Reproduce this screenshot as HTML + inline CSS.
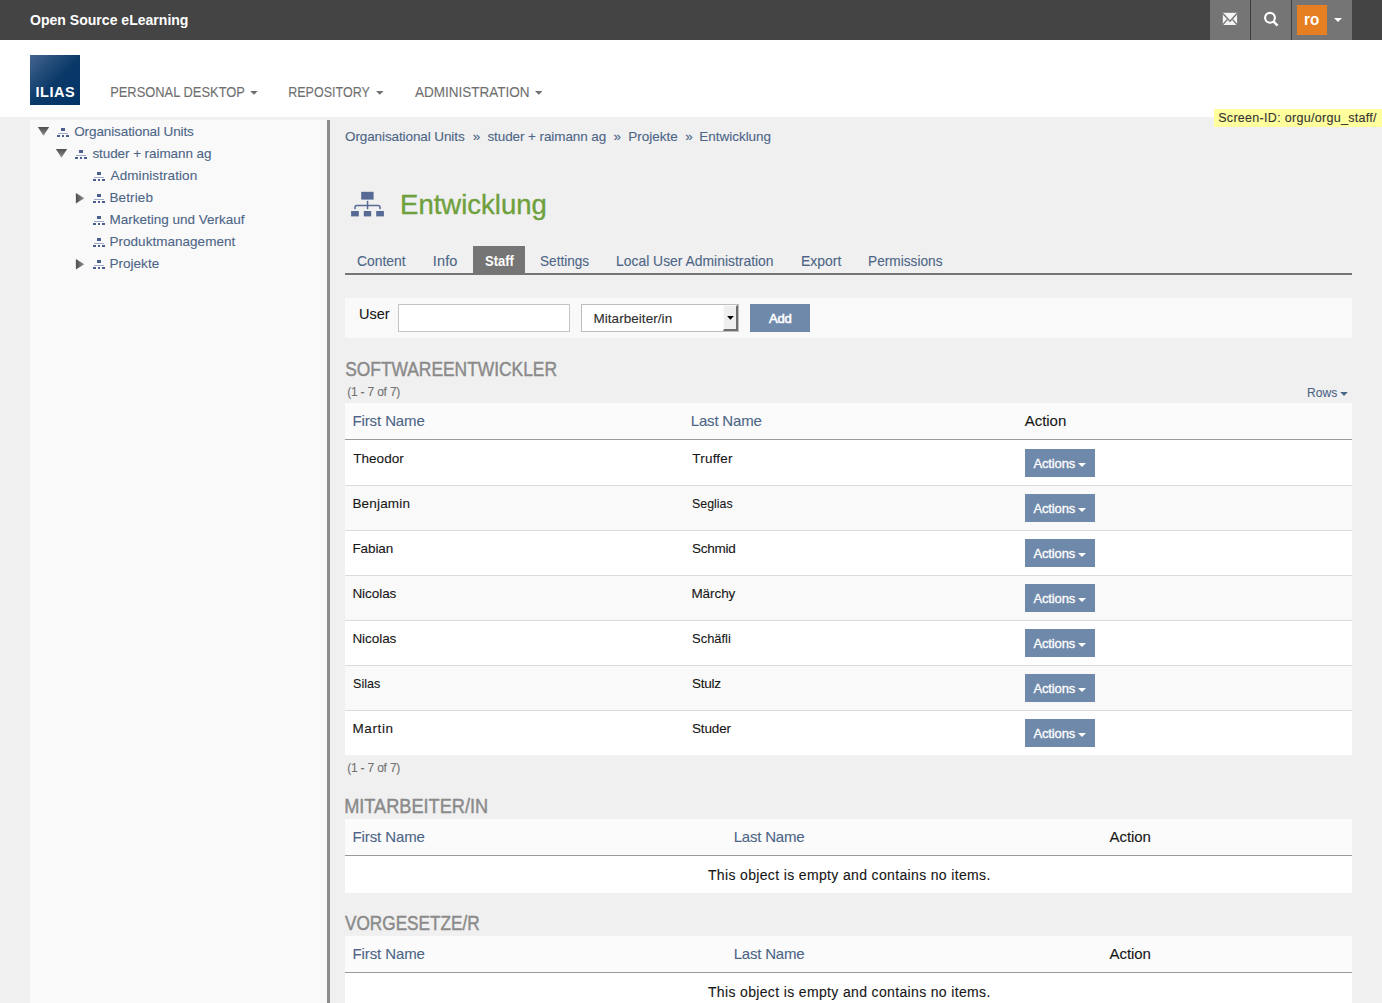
<!DOCTYPE html>
<html><head><meta charset="utf-8">
<style>
*{margin:0;padding:0;box-sizing:border-box}
html,body{width:1382px;height:1003px;overflow:hidden}
body{background:#f0f0f0;font-family:"Liberation Sans",sans-serif;position:relative}
.a{position:absolute}
.t{position:absolute;white-space:nowrap;line-height:1;-webkit-text-stroke:0.1px currentColor}
svg{position:absolute;overflow:visible}
</style></head><body>
<div class="a" style="left:0px;top:0px;width:1382px;height:40px;background:#444;"></div>
<div class="a" style="left:1210px;top:0px;width:142px;height:40px;background:#757575;"></div>
<div class="a" style="left:1250px;top:0px;width:1px;height:40px;background:#3c3c3c;"></div>
<div class="a" style="left:1291px;top:0px;width:1px;height:40px;background:#3c3c3c;"></div>
<div class="a" style="left:1297px;top:5px;width:30px;height:30px;background:#e67e22;"></div>
<div class="a" style="left:0px;top:40px;width:1382px;height:77px;background:#fff;"></div>
<div class="a" style="left:30px;top:55px;width:50px;height:50px;background:linear-gradient(135deg,#44658f 0%,#0a3969 52%,#003466 100%);"></div>
<div class="a" style="left:1214px;top:109px;width:168px;height:18px;background:#ffff9e;"></div>
<div class="a" style="left:30px;top:120px;width:297px;height:883px;background:#f9f9f9;"></div>
<div class="a" style="left:327px;top:120px;width:3px;height:883px;background:#8c8c8c;"></div>
<div class="a" style="left:473px;top:246px;width:52px;height:27px;background:#757575;"></div>
<div class="a" style="left:345px;top:273px;width:1007px;height:2px;background:#757575;"></div>
<div class="a" style="left:345px;top:298px;width:1007px;height:40px;background:#f9f9f9;"></div>
<div class="a" style="left:398px;top:304px;width:172px;height:28px;background:#fff;border:1px solid #c4c4c4"></div>
<div class="a" style="left:581px;top:304px;width:158px;height:28px;background:#fff;border:1px solid #bdbdbd"></div>
<div class="a" style="left:723px;top:305px;width:15px;height:26px;background:#efefef;border-left:1px solid #fafafa;border-top:1px solid #fafafa;border-right:2px solid #6e6e6e;border-bottom:2px solid #6e6e6e"></div>
<div class="a" style="left:750px;top:304px;width:60px;height:28px;background:#6f89ab;"></div>
<div class="a" style="left:345px;top:403px;width:1007px;height:36px;background:#fbfbfb;"></div>
<div class="a" style="left:345px;top:439px;width:1007px;height:1px;background:#999999;"></div>
<div class="a" style="left:345px;top:440px;width:1007px;height:45px;background:#ffffff;"></div>
<div class="a" style="left:345px;top:485px;width:1007px;height:45px;background:#f9f9f9;"></div>
<div class="a" style="left:345px;top:530px;width:1007px;height:45px;background:#ffffff;"></div>
<div class="a" style="left:345px;top:575px;width:1007px;height:45px;background:#f9f9f9;"></div>
<div class="a" style="left:345px;top:620px;width:1007px;height:45px;background:#ffffff;"></div>
<div class="a" style="left:345px;top:665px;width:1007px;height:45px;background:#f9f9f9;"></div>
<div class="a" style="left:345px;top:710px;width:1007px;height:45px;background:#ffffff;"></div>
<div class="a" style="left:345px;top:485px;width:1007px;height:1px;background:#dcdcdc;"></div>
<div class="a" style="left:1025px;top:449px;width:70px;height:28px;background:#6f89ab;"></div>
<div class="a" style="left:345px;top:530px;width:1007px;height:1px;background:#dcdcdc;"></div>
<div class="a" style="left:1025px;top:494px;width:70px;height:28px;background:#6f89ab;"></div>
<div class="a" style="left:345px;top:575px;width:1007px;height:1px;background:#dcdcdc;"></div>
<div class="a" style="left:1025px;top:539px;width:70px;height:28px;background:#6f89ab;"></div>
<div class="a" style="left:345px;top:620px;width:1007px;height:1px;background:#dcdcdc;"></div>
<div class="a" style="left:1025px;top:584px;width:70px;height:28px;background:#6f89ab;"></div>
<div class="a" style="left:345px;top:665px;width:1007px;height:1px;background:#dcdcdc;"></div>
<div class="a" style="left:1025px;top:629px;width:70px;height:28px;background:#6f89ab;"></div>
<div class="a" style="left:345px;top:710px;width:1007px;height:1px;background:#dcdcdc;"></div>
<div class="a" style="left:1025px;top:674px;width:70px;height:28px;background:#6f89ab;"></div>
<div class="a" style="left:1025px;top:719px;width:70px;height:28px;background:#6f89ab;"></div>
<div class="a" style="left:345px;top:819px;width:1007px;height:36px;background:#fbfbfb;"></div>
<div class="a" style="left:345px;top:855px;width:1007px;height:1px;background:#999999;"></div>
<div class="a" style="left:345px;top:856px;width:1007px;height:37px;background:#ffffff;"></div>
<div class="a" style="left:345px;top:936px;width:1007px;height:36px;background:#fbfbfb;"></div>
<div class="a" style="left:345px;top:972px;width:1007px;height:1px;background:#999999;"></div>
<div class="a" style="left:345px;top:973px;width:1007px;height:37px;background:#ffffff;"></div>

<svg style="left:0;top:0" width="1" height="1"><polygon points="250.2,91 257.7,91 253.95,94.8" fill="#6f6f6f"/></svg>
<svg style="left:0;top:0" width="1" height="1"><polygon points="376,91 383.5,91 379.75,94.8" fill="#6f6f6f"/></svg>
<svg style="left:0;top:0" width="1" height="1"><polygon points="535,91 542.5,91 538.75,94.8" fill="#6f6f6f"/></svg>
<svg style="left:0;top:0" width="1" height="1"><polygon points="1334,18 1342,18 1338.0,22" fill="#fff"/></svg>
<svg style="left:0;top:0" width="1" height="1"><polygon points="1340.2,392 1347.8,392 1344.0,396" fill="#4c6586"/></svg>
<svg style="left:0;top:0" width="1" height="1"><polygon points="727.1,316 733.8000000000001,316 730.45,319.7" fill="#000"/></svg>
<svg style="left:0;top:0" width="1" height="1"><polygon points="1078,463 1086,463 1082.0,467" fill="#fff"/></svg>
<svg style="left:0;top:0" width="1" height="1"><polygon points="1078,508 1086,508 1082.0,512" fill="#fff"/></svg>
<svg style="left:0;top:0" width="1" height="1"><polygon points="1078,553 1086,553 1082.0,557" fill="#fff"/></svg>
<svg style="left:0;top:0" width="1" height="1"><polygon points="1078,598 1086,598 1082.0,602" fill="#fff"/></svg>
<svg style="left:0;top:0" width="1" height="1"><polygon points="1078,643 1086,643 1082.0,647" fill="#fff"/></svg>
<svg style="left:0;top:0" width="1" height="1"><polygon points="1078,688 1086,688 1082.0,692" fill="#fff"/></svg>
<svg style="left:0;top:0" width="1" height="1"><polygon points="1078,733 1086,733 1082.0,737" fill="#fff"/></svg>
<svg style="left:0;top:0" width="1" height="1">
<rect x="1222.8" y="12.8" width="14.3" height="12.2" fill="#f4f4f4"/>
<polyline points="1222.8,13.6 1230,21.2 1237.1,13.6" fill="none" stroke="#757575" stroke-width="1.5"/>
<line x1="1222.6" y1="25" x2="1227.4" y2="19.4" stroke="#757575" stroke-width="1.3"/>
<line x1="1237.3" y1="25" x2="1232.5" y2="19.4" stroke="#757575" stroke-width="1.3"/>
</svg>
<svg style="left:0;top:0" width="1" height="1">
<circle cx="1270" cy="17.8" r="4.9" fill="none" stroke="#fff" stroke-width="2.1"/>
<line x1="1273.6" y1="21.6" x2="1277.6" y2="25.6" stroke="#fff" stroke-width="2.4" stroke-linecap="butt"/>
</svg>
<svg style="left:0;top:0" width="1" height="1">
<rect x="361.2" y="191.8" width="12.4" height="7.8" fill="#566a95"/>
<rect x="366.8" y="200.8" width="1.5" height="8.4" fill="#566a95"/>
<path d="M355 209.2 V207.4 Q355 205.6 356.8 205.6 H378.2 Q380 205.6 380 207.4 V209.2" fill="none" stroke="#566a95" stroke-width="1.5"/>
<rect x="351.1" y="211" width="7.7" height="5.4" fill="#566a95"/>
<rect x="363.8" y="211" width="7.4" height="5.4" fill="#566a95"/>
<rect x="376.2" y="211" width="7.7" height="5.4" fill="#566a95"/>
</svg>
<svg style="left:0;top:0" width="1" height="1"><defs><linearGradient id="gd" x1="0" y1="0" x2="0" y2="1"><stop offset="0" stop-color="#4d4d4d"/><stop offset="1" stop-color="#919191"/></linearGradient></defs>
<polygon points="37.85,126.95 49.150000000000006,126.95 43.5,135.75" fill="url(#gd)"/></svg>
<svg style="left:0;top:0" width="1" height="1"><defs><linearGradient id="gd" x1="0" y1="0" x2="0" y2="1"><stop offset="0" stop-color="#4d4d4d"/><stop offset="1" stop-color="#919191"/></linearGradient></defs>
<polygon points="55.85,148.95 67.15,148.95 61.5,157.75" fill="url(#gd)"/></svg>
<svg style="left:0;top:0" width="1" height="1"><defs><linearGradient id="gr" x1="0" y1="0" x2="1" y2="0"><stop offset="0" stop-color="#4d4d4d"/><stop offset="1" stop-color="#919191"/></linearGradient></defs>
<polygon points="75.9,193 84.30000000000001,198.2 75.9,203.4" fill="url(#gr)"/></svg>
<svg style="left:0;top:0" width="1" height="1"><defs><linearGradient id="gr" x1="0" y1="0" x2="1" y2="0"><stop offset="0" stop-color="#4d4d4d"/><stop offset="1" stop-color="#919191"/></linearGradient></defs>
<polygon points="75.9,259 84.30000000000001,264.2 75.9,269.4" fill="url(#gr)"/></svg>
<svg style="left:0;top:0" width="1" height="1">
<rect x="61" y="128" width="4" height="3" fill="#4a5e90"/>
<rect x="58" y="133" width="10" height="0.8" fill="#8a99bb"/>
<rect x="57" y="135" width="3" height="2" fill="#4a5e90"/>
<rect x="62" y="135" width="2" height="2" fill="#4a5e90"/>
<rect x="66" y="135" width="3" height="2" fill="#4a5e90"/>
</svg>
<svg style="left:0;top:0" width="1" height="1">
<rect x="79" y="150" width="4" height="3" fill="#4a5e90"/>
<rect x="76" y="155" width="10" height="0.8" fill="#8a99bb"/>
<rect x="75" y="157" width="3" height="2" fill="#4a5e90"/>
<rect x="80" y="157" width="2" height="2" fill="#4a5e90"/>
<rect x="84" y="157" width="3" height="2" fill="#4a5e90"/>
</svg>
<svg style="left:0;top:0" width="1" height="1">
<rect x="97" y="172" width="4" height="3" fill="#4a5e90"/>
<rect x="94" y="177" width="10" height="0.8" fill="#8a99bb"/>
<rect x="93" y="179" width="3" height="2" fill="#4a5e90"/>
<rect x="98" y="179" width="2" height="2" fill="#4a5e90"/>
<rect x="102" y="179" width="3" height="2" fill="#4a5e90"/>
</svg>
<svg style="left:0;top:0" width="1" height="1">
<rect x="97" y="194" width="4" height="3" fill="#4a5e90"/>
<rect x="94" y="199" width="10" height="0.8" fill="#8a99bb"/>
<rect x="93" y="201" width="3" height="2" fill="#4a5e90"/>
<rect x="98" y="201" width="2" height="2" fill="#4a5e90"/>
<rect x="102" y="201" width="3" height="2" fill="#4a5e90"/>
</svg>
<svg style="left:0;top:0" width="1" height="1">
<rect x="97" y="216" width="4" height="3" fill="#4a5e90"/>
<rect x="94" y="221" width="10" height="0.8" fill="#8a99bb"/>
<rect x="93" y="223" width="3" height="2" fill="#4a5e90"/>
<rect x="98" y="223" width="2" height="2" fill="#4a5e90"/>
<rect x="102" y="223" width="3" height="2" fill="#4a5e90"/>
</svg>
<svg style="left:0;top:0" width="1" height="1">
<rect x="97" y="238" width="4" height="3" fill="#4a5e90"/>
<rect x="94" y="243" width="10" height="0.8" fill="#8a99bb"/>
<rect x="93" y="245" width="3" height="2" fill="#4a5e90"/>
<rect x="98" y="245" width="2" height="2" fill="#4a5e90"/>
<rect x="102" y="245" width="3" height="2" fill="#4a5e90"/>
</svg>
<svg style="left:0;top:0" width="1" height="1">
<rect x="97" y="260" width="4" height="3" fill="#4a5e90"/>
<rect x="94" y="265" width="10" height="0.8" fill="#8a99bb"/>
<rect x="93" y="267" width="3" height="2" fill="#4a5e90"/>
<rect x="98" y="267" width="2" height="2" fill="#4a5e90"/>
<rect x="102" y="267" width="3" height="2" fill="#4a5e90"/>
</svg>

<div class="t" style="left:29.58px;top:11.88px;font-size:15.5px;letter-spacing:0.000px;color:#fff;font-weight:bold;transform:scaleX(0.9058);transform-origin:0.62px 0;-webkit-text-stroke:0;">Open Source eLearning</div>
<div class="t" style="left:1303.89px;top:10.61px;font-size:17.0px;letter-spacing:0.000px;color:#fff;font-weight:bold;transform:scaleX(0.8939);transform-origin:1.10px 0;-webkit-text-stroke:0;">ro</div>
<div class="t" style="left:109.74px;top:84.73px;font-size:14.5px;letter-spacing:0.000px;color:#6f6f6f;font-weight:normal;transform:scaleX(0.8899);transform-origin:1.16px 0;">PERSONAL DESKTOP</div>
<div class="t" style="left:287.94px;top:84.73px;font-size:14.5px;letter-spacing:0.000px;color:#6f6f6f;font-weight:normal;transform:scaleX(0.8637);transform-origin:1.16px 0;">REPOSITORY</div>
<div class="t" style="left:414.70px;top:84.73px;font-size:14.5px;letter-spacing:0.000px;color:#6f6f6f;font-weight:normal;transform:scaleX(0.9319);transform-origin:0.00px 0;">ADMINISTRATION</div>
<div class="t" style="left:35.56px;top:84.93px;font-size:14.5px;letter-spacing:0.526px;color:#fff;font-weight:bold;-webkit-text-stroke:0;">ILIAS</div>
<div class="t" style="left:1218.24px;top:111.82px;font-size:12.5px;letter-spacing:0.296px;color:#333;font-weight:normal;">Screen-ID: orgu/orgu_staff/</div>
<div class="t" style="left:74.19px;top:124.57px;font-size:13.5px;letter-spacing:-0.099px;color:#4c6586;font-weight:normal;">Organisational Units</div>
<div class="t" style="left:92.39px;top:146.57px;font-size:13.5px;letter-spacing:-0.074px;color:#4c6586;font-weight:normal;">studer + raimann ag</div>
<div class="t" style="left:110.60px;top:168.57px;font-size:13.5px;letter-spacing:0.081px;color:#4c6586;font-weight:normal;">Administration</div>
<div class="t" style="left:109.52px;top:190.57px;font-size:13.5px;letter-spacing:0.099px;color:#4c6586;font-weight:normal;">Betrieb</div>
<div class="t" style="left:109.52px;top:212.57px;font-size:13.5px;letter-spacing:-0.008px;color:#4c6586;font-weight:normal;">Marketing und Verkauf</div>
<div class="t" style="left:109.52px;top:234.57px;font-size:13.5px;letter-spacing:0.023px;color:#4c6586;font-weight:normal;">Produktmanagement</div>
<div class="t" style="left:109.52px;top:256.57px;font-size:13.5px;letter-spacing:0.016px;color:#4c6586;font-weight:normal;">Projekte</div>
<div class="t" style="left:344.99px;top:129.57px;font-size:13.5px;letter-spacing:-0.099px;color:#4c6586;font-weight:normal;">Organisational Units</div>
<div class="t" style="left:472.86px;top:129.57px;font-size:13.5px;letter-spacing:0.000px;color:#4c6586;font-weight:normal;">»</div>
<div class="t" style="left:487.40px;top:129.57px;font-size:13.5px;letter-spacing:-0.085px;color:#4c6586;font-weight:normal;">studer + raimann ag</div>
<div class="t" style="left:613.56px;top:129.57px;font-size:13.5px;letter-spacing:0.000px;color:#4c6586;font-weight:normal;">»</div>
<div class="t" style="left:628.22px;top:129.57px;font-size:13.5px;letter-spacing:-0.013px;color:#4c6586;font-weight:normal;">Projekte</div>
<div class="t" style="left:685.26px;top:129.57px;font-size:13.5px;letter-spacing:0.000px;color:#4c6586;font-weight:normal;">»</div>
<div class="t" style="left:699.32px;top:129.57px;font-size:13.5px;letter-spacing:-0.026px;color:#4c6586;font-weight:normal;">Entwicklung</div>
<div class="t" style="left:399.96px;top:190.70px;font-size:28.0px;letter-spacing:0.000px;color:#6ea03c;font-weight:normal;transform:scaleX(0.9827);transform-origin:2.24px 0;-webkit-text-stroke:0.35px #6ea03c;">Entwicklung</div>
<div class="t" style="left:356.88px;top:253.73px;font-size:14.5px;letter-spacing:0.000px;color:#4c6586;font-weight:normal;transform:scaleX(0.9569);transform-origin:0.72px 0;">Content</div>
<div class="t" style="left:432.80px;top:253.73px;font-size:14.5px;letter-spacing:0.147px;color:#4c6586;font-weight:normal;">Info</div>
<div class="t" style="left:540.45px;top:253.73px;font-size:14.5px;letter-spacing:0.000px;color:#4c6586;font-weight:normal;transform:scaleX(0.9364);transform-origin:0.65px 0;">Settings</div>
<div class="t" style="left:616.34px;top:253.73px;font-size:14.5px;letter-spacing:0.000px;color:#4c6586;font-weight:normal;transform:scaleX(0.9579);transform-origin:1.16px 0;">Local User Administration</div>
<div class="t" style="left:800.54px;top:253.73px;font-size:14.5px;letter-spacing:0.000px;color:#4c6586;font-weight:normal;transform:scaleX(0.9606);transform-origin:1.16px 0;">Export</div>
<div class="t" style="left:868.24px;top:253.73px;font-size:14.5px;letter-spacing:0.000px;color:#4c6586;font-weight:normal;transform:scaleX(0.9433);transform-origin:1.16px 0;">Permissions</div>
<div class="t" style="left:484.76px;top:253.73px;font-size:14.5px;letter-spacing:0.000px;color:#fff;font-weight:bold;transform:scaleX(0.8923);transform-origin:0.43px 0;-webkit-text-stroke:0;">Staff</div>
<div class="t" style="left:359.14px;top:306.28px;font-size:15.5px;letter-spacing:0.000px;color:#161616;font-weight:normal;transform:scaleX(0.9358);transform-origin:1.16px 0;">User</div>
<div class="t" style="left:593.42px;top:311.57px;font-size:13.5px;letter-spacing:0.056px;color:#2e2e2e;font-weight:normal;">Mitarbeiter/in</div>
<div class="t" style="left:769.00px;top:311.50px;font-size:13.0px;letter-spacing:-0.148px;color:#fff;font-weight:normal;-webkit-text-stroke:0.55px #fff;">Add</div>
<div class="t" style="left:344.68px;top:358.65px;font-size:20.5px;letter-spacing:0.000px;color:#8a8a8a;font-weight:normal;transform:scaleX(0.8482);transform-origin:0.92px 0;-webkit-text-stroke:0.45px #8a8a8a;">SOFTWAREENTWICKLER</div>
<div class="t" style="left:344.36px;top:796.35px;font-size:20.5px;letter-spacing:0.000px;color:#8a8a8a;font-weight:normal;transform:scaleX(0.8858);transform-origin:1.64px 0;-webkit-text-stroke:0.45px #8a8a8a;">MITARBEITER/IN</div>
<div class="t" style="left:344.80px;top:913.35px;font-size:20.5px;letter-spacing:0.000px;color:#8a8a8a;font-weight:normal;transform:scaleX(0.8384);transform-origin:0.10px 0;-webkit-text-stroke:0.45px #8a8a8a;">VORGESETZE/R</div>
<div class="t" style="left:347.18px;top:385.84px;font-size:12.0px;letter-spacing:-0.198px;color:#707070;font-weight:normal;">(1 - 7 of 7)</div>
<div class="t" style="left:347.18px;top:761.84px;font-size:12.0px;letter-spacing:-0.198px;color:#707070;font-weight:normal;">(1 - 7 of 7)</div>
<div class="t" style="left:1307.16px;top:386.00px;font-size:13.0px;letter-spacing:0.000px;color:#4c6586;font-weight:normal;transform:scaleX(0.9257);transform-origin:1.04px 0;">Rows</div>
<div class="t" style="left:352.40px;top:413.30px;font-size:15.0px;letter-spacing:-0.097px;color:#4c6586;font-weight:normal;">First Name</div>
<div class="t" style="left:690.80px;top:413.30px;font-size:15.0px;letter-spacing:-0.194px;color:#4c6586;font-weight:normal;">Last Name</div>
<div class="t" style="left:1024.80px;top:413.30px;font-size:15.0px;letter-spacing:-0.045px;color:#161616;font-weight:normal;">Action</div>
<div class="t" style="left:353.23px;top:451.57px;font-size:13.5px;letter-spacing:0.042px;color:#161616;font-weight:normal;">Theodor</div>
<div class="t" style="left:692.23px;top:451.57px;font-size:13.5px;letter-spacing:0.221px;color:#161616;font-weight:normal;">Truffer</div>
<div class="t" style="left:1033.40px;top:457.00px;font-size:13.0px;letter-spacing:-0.131px;color:#fff;font-weight:normal;-webkit-text-stroke:0.3px #fff;">Actions</div>
<div class="t" style="left:352.42px;top:496.57px;font-size:13.5px;letter-spacing:0.180px;color:#161616;font-weight:normal;">Benjamin</div>
<div class="t" style="left:691.89px;top:496.57px;font-size:13.5px;letter-spacing:0.000px;color:#161616;font-weight:normal;transform:scaleX(0.9167);transform-origin:0.61px 0;">Seglias</div>
<div class="t" style="left:1033.40px;top:502.00px;font-size:13.0px;letter-spacing:-0.131px;color:#fff;font-weight:normal;-webkit-text-stroke:0.3px #fff;">Actions</div>
<div class="t" style="left:352.42px;top:541.57px;font-size:13.5px;letter-spacing:-0.077px;color:#161616;font-weight:normal;">Fabian</div>
<div class="t" style="left:691.89px;top:541.57px;font-size:13.5px;letter-spacing:-0.228px;color:#161616;font-weight:normal;">Schmid</div>
<div class="t" style="left:1033.40px;top:547.00px;font-size:13.0px;letter-spacing:-0.131px;color:#fff;font-weight:normal;-webkit-text-stroke:0.3px #fff;">Actions</div>
<div class="t" style="left:352.42px;top:586.57px;font-size:13.5px;letter-spacing:-0.055px;color:#161616;font-weight:normal;">Nicolas</div>
<div class="t" style="left:691.42px;top:586.57px;font-size:13.5px;letter-spacing:-0.060px;color:#161616;font-weight:normal;">Märchy</div>
<div class="t" style="left:1033.40px;top:592.00px;font-size:13.0px;letter-spacing:-0.131px;color:#fff;font-weight:normal;-webkit-text-stroke:0.3px #fff;">Actions</div>
<div class="t" style="left:352.42px;top:631.57px;font-size:13.5px;letter-spacing:-0.055px;color:#161616;font-weight:normal;">Nicolas</div>
<div class="t" style="left:691.89px;top:631.57px;font-size:13.5px;letter-spacing:0.000px;color:#161616;font-weight:normal;transform:scaleX(0.9586);transform-origin:0.61px 0;">Schäfli</div>
<div class="t" style="left:1033.40px;top:637.00px;font-size:13.0px;letter-spacing:-0.131px;color:#fff;font-weight:normal;-webkit-text-stroke:0.3px #fff;">Actions</div>
<div class="t" style="left:352.89px;top:676.57px;font-size:13.5px;letter-spacing:0.000px;color:#161616;font-weight:normal;transform:scaleX(0.9286);transform-origin:0.61px 0;">Silas</div>
<div class="t" style="left:691.89px;top:676.57px;font-size:13.5px;letter-spacing:-0.214px;color:#161616;font-weight:normal;">Stulz</div>
<div class="t" style="left:1033.40px;top:682.00px;font-size:13.0px;letter-spacing:-0.131px;color:#fff;font-weight:normal;-webkit-text-stroke:0.3px #fff;">Actions</div>
<div class="t" style="left:352.42px;top:721.57px;font-size:13.5px;letter-spacing:0.619px;color:#161616;font-weight:normal;">Martin</div>
<div class="t" style="left:691.89px;top:721.57px;font-size:13.5px;letter-spacing:-0.110px;color:#161616;font-weight:normal;">Studer</div>
<div class="t" style="left:1033.40px;top:727.00px;font-size:13.0px;letter-spacing:-0.131px;color:#fff;font-weight:normal;-webkit-text-stroke:0.3px #fff;">Actions</div>
<div class="t" style="left:352.50px;top:829.30px;font-size:15.0px;letter-spacing:-0.097px;color:#4c6586;font-weight:normal;">First Name</div>
<div class="t" style="left:733.70px;top:829.30px;font-size:15.0px;letter-spacing:-0.206px;color:#4c6586;font-weight:normal;">Last Name</div>
<div class="t" style="left:1109.50px;top:829.30px;font-size:15.0px;letter-spacing:-0.045px;color:#161616;font-weight:normal;">Action</div>
<div class="t" style="left:707.92px;top:867.95px;font-size:14.0px;letter-spacing:0.351px;color:#161616;font-weight:normal;">This object is empty and contains no items.</div>
<div class="t" style="left:352.50px;top:946.30px;font-size:15.0px;letter-spacing:-0.097px;color:#4c6586;font-weight:normal;">First Name</div>
<div class="t" style="left:733.70px;top:946.30px;font-size:15.0px;letter-spacing:-0.206px;color:#4c6586;font-weight:normal;">Last Name</div>
<div class="t" style="left:1109.50px;top:946.30px;font-size:15.0px;letter-spacing:-0.045px;color:#161616;font-weight:normal;">Action</div>
<div class="t" style="left:707.92px;top:984.95px;font-size:14.0px;letter-spacing:0.351px;color:#161616;font-weight:normal;">This object is empty and contains no items.</div>

</body></html>
